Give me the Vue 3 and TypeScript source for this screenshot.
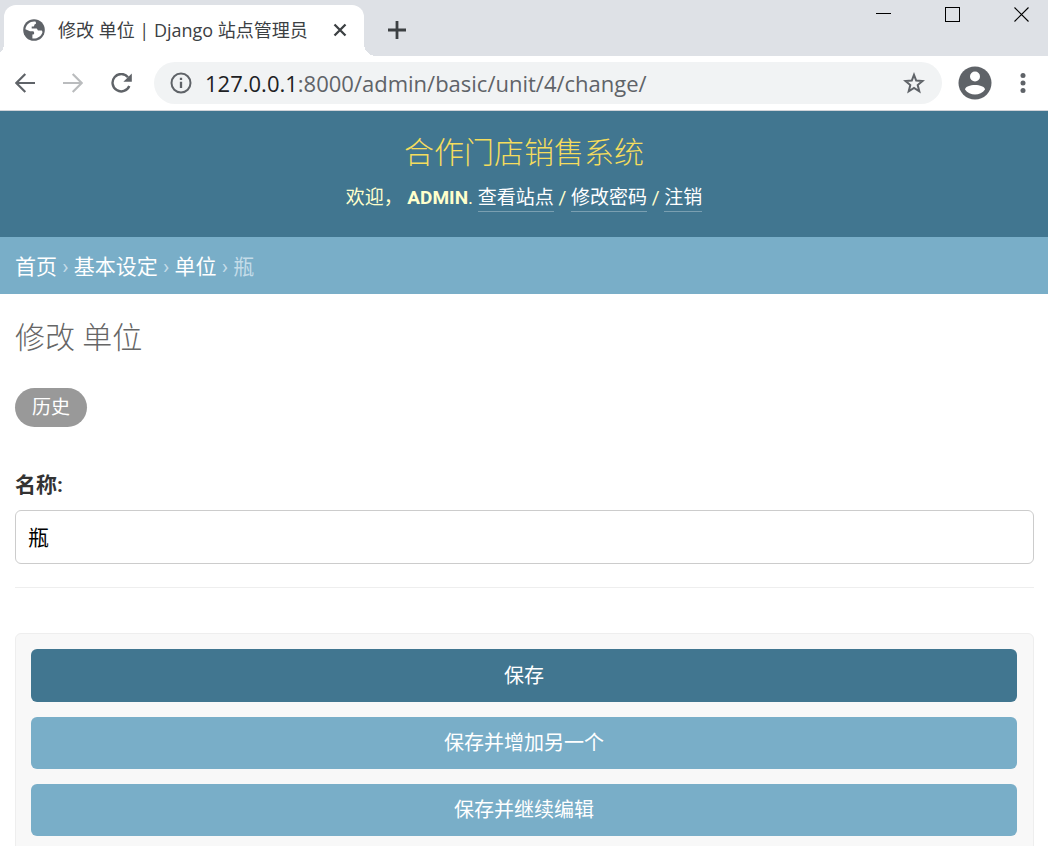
<script setup lang="ts">
import { ref } from 'vue'

const name = ref('瓶')

const tools = ['查看站点', '修改密码', '注销']
const crumbs = ['首页', '基本设定', '单位']
const actions = [
  { label: '保存', primary: true },
  { label: '保存并增加另一个', primary: false },
  { label: '保存并继续编辑', primary: false },
]
</script>

<template>
  <div class="window">
    <div class="tabstrip">
      <div class="tab">
        <svg class="globe" viewBox="0 0 22 22" width="22" height="22" aria-hidden="true">
          <circle cx="11" cy="11" r="10.8" fill="#5f6368" />
          <path d="M12.4 2.5C7.5 1.8 3 5.2 2.4 10.2L7 12.2H9.8C11.4 12.2 11.2 14 11 15.2L9.4 15.4V19.5C14 20 18.400 17.600 19.500 13L18.800 11.600H15.800C14.400 11.600 14.500 9.800 13.600 9.400H8.700V7.400H10.400C11.600 7.400 11 5.600 11.800 5.200C13.200 5 13.400 4.200 12.400 2.500Z" fill="#fff" />
        </svg>
        <span class="tab-title">修改 单位 | Django 站点管理员</span>
        <button class="icon-btn" type="button" aria-label="关闭标签页">
          <svg viewBox="0 0 14 14" width="14" height="14"><path d="M1.500 1.500L12.500 12.500M12.500 1.500L1.500 12.500" stroke="#3c4043" stroke-width="2.300" /></svg>
        </button>
      </div>
      <button class="icon-btn new-tab" type="button" aria-label="新标签页">
        <svg viewBox="0 0 18 18" width="18" height="18"><path d="M9 0V18M0 9H18" stroke="#3c4043" stroke-width="2.800" /></svg>
      </button>
      <div class="controls">
        <button class="icon-btn" type="button" aria-label="最小化">
          <svg viewBox="0 0 15 15" width="15" height="15"><path d="M0 6.500H15" stroke="#000" /></svg>
        </button>
        <button class="icon-btn" type="button" aria-label="最大化">
          <svg viewBox="0 0 15 15" width="15" height="15"><rect x=".5" y=".5" width="14" height="14" fill="none" stroke="#000" /></svg>
        </button>
        <button class="icon-btn" type="button" aria-label="关闭">
          <svg viewBox="0 0 15 15" width="15" height="15"><path d="M.5 .5L14.500 14.500M14.500 .5L.5 14.500" stroke="#000" stroke-width="1.100" /></svg>
        </button>
      </div>
    </div>

    <div class="toolbar">
      <div class="nav">
        <button class="icon-btn" type="button" aria-label="后退">
          <svg viewBox="0 0 20 20" width="20" height="20"><path d="M20 10H1.800M10.300 1L1.300 10L10.300 19" fill="none" stroke="#5f6368" stroke-width="2.200" /></svg>
        </button>
        <button class="icon-btn" type="button" aria-label="前进">
          <svg viewBox="0 0 20 20" width="20" height="20"><path d="M0 10H18.200M9.700 1L18.700 10L9.700 19" fill="none" stroke="#babcbe" stroke-width="2.200" /></svg>
        </button>
        <button class="icon-btn" type="button" aria-label="重新加载">
          <svg viewBox="0 0 22 20" width="22" height="20"><path d="M17 4.200A8.700 8.700 0 1 0 18.300 13" fill="none" stroke="#5f6368" stroke-width="2.400" /><path d="M20.800 .4V8.800H12.400Z" fill="#5f6368" /></svg>
        </button>
      </div>
      <div class="omnibox">
        <svg viewBox="0 0 22 22" width="22" height="22" aria-hidden="true"><circle cx="11" cy="11" r="9.500" fill="none" stroke="#5f6368" stroke-width="2" /><path d="M11 9.700V16M11 5.700V8" stroke="#5f6368" stroke-width="2.300" /></svg>
        <span class="url"><span class="host">127.0.0.1</span>:8000/admin/basic/unit/4/change/</span>
        <button class="icon-btn" type="button" aria-label="添加书签">
          <svg viewBox="0 0 22 22" width="22" height="22"><path d="M11 2.800L13.200 8.500L19.500 9L14.700 13L16.300 19.400L11 16L5.700 19.400L7.300 13L2.500 9L8.800 8.500Z" fill="none" stroke="#5f6368" stroke-width="2" /></svg>
        </button>
      </div>
      <button class="icon-btn" type="button" aria-label="用户">
        <svg viewBox="0 0 34 34" width="34" height="34"><circle cx="17" cy="17" r="16.500" fill="#5f6368" /><circle cx="17" cy="10.500" r="5" fill="#fff" /><path d="M7 23.500C7.500 17.500 26.500 17.500 27 23.500C22.500 30.300 11.500 30.300 7 23.500Z" fill="#fff" /></svg>
      </button>
      <button class="icon-btn more" type="button" aria-label="菜单">
        <svg viewBox="0 0 6 20" width="6" height="20"><g fill="#5f6368"><circle cx="3" cy="2.500" r="2.500" /><circle cx="3" cy="10" r="2.500" /><circle cx="3" cy="17.500" r="2.500" /></g></svg>
      </button>
    </div>

    <div class="page">
      <header class="header">
        <div class="brand">合作门店销售系统</div>
        <div class="user-tools">
          欢迎， <strong>ADMIN</strong>.
          <template v-for="(tool, i) in tools" :key="tool"><template v-if="i"> / </template><a href="#">{{ tool }}</a></template>
        </div>
      </header>
      <nav class="breadcrumbs">
        <template v-for="crumb in crumbs" :key="crumb"><a href="#">{{ crumb }}</a> › </template>瓶
      </nav>
      <main class="content">
        <h1>修改 单位</h1>
        <a class="history" href="#">历史</a>
        <form @submit.prevent>
          <div class="row">
            <label for="unit-name">名称:</label>
            <input id="unit-name" v-model="name" type="text">
          </div>
          <div class="submit-row">
            <button v-for="a in actions" :key="a.label" type="submit" :class="{ primary: a.primary }">{{ a.label }}</button>
          </div>
        </form>
      </main>
    </div>
  </div>
</template>

<style>
body {
  margin: 0;
  background: #fff;
}
</style>

<style scoped>
* {
  box-sizing: border-box;
}
.window {
  display: flex;
  flex-direction: column;
  height: 100vh;
  overflow: hidden;
  font-family: Roboto, "Noto Sans CJK SC", sans-serif;
}
svg {
  display: block;
  flex: none;
}
.icon-btn {
  padding: 0;
  border: 0;
  background: none;
}
.tabstrip {
  display: flex;
  flex: none;
  height: 56px;
  padding-left: 4px;
  background: #dee1e6;
}
.tab {
  position: relative;
  display: flex;
  align-items: center;
  width: 360px;
  margin-top: 5px;
  padding: 0 17px 2px 19px;
  border-radius: 12px 12px 0 0;
  background: #fff;
}
.tab::before,
.tab::after {
  content: "";
  position: absolute;
  bottom: 0;
  width: 12px;
  height: 12px;
}
.tab::before {
  right: 100%;
  background: radial-gradient(circle at 0 0, transparent 12px, #fff 12px);
}
.tab::after {
  left: 100%;
  background: radial-gradient(circle at 100% 0, transparent 12px, #fff 12px);
}
.tab-title {
  flex: 1;
  margin-left: 13px;
  color: #3c4043;
  font: 18px/26px "Open Sans", "Noto Sans CJK SC", sans-serif;
  white-space: nowrap;
}
.new-tab {
  margin: 4px 0 0 24px;
}
.controls {
  display: flex;
  align-items: flex-start;
  gap: 54px;
  margin-left: auto;
  padding: 7px 19px 0 0;
}
.toolbar {
  display: flex;
  flex: none;
  align-items: center;
  height: 55px;
  padding: 0 22px 0 15px;
  border-bottom: 1px solid #d0d3d8;
  background: #fff;
}
.nav {
  display: flex;
  gap: 28px;
}
.omnibox {
  display: flex;
  flex: 1;
  align-items: center;
  height: 42px;
  margin: 0 16px 0 21px;
  padding: 0 17px 0 16px;
  border-radius: 21px;
  background: #f1f3f4;
}
.url {
  flex: 1;
  margin-left: 13px;
  color: #5f6368;
  font: 22px/30px "Open Sans", "Noto Sans", sans-serif;
}
.host {
  color: #202124;
}
.more {
  margin-left: 28px;
}
.page {
  flex: 1;
  min-height: 0;
  overflow: hidden;
}
.header {
  height: 126px;
  padding-top: 21px;
  background: #417690;
  color: #ffc;
  text-align: center;
}
.brand {
  color: #f5dd5d;
  font-size: 30px;
  font-weight: 300;
  line-height: 42px;
}
.user-tools {
  margin-top: 10px;
  font-size: 19px;
  line-height: 28px;
}
.user-tools a {
  display: inline-block;
  border-bottom: 1px solid #7a9fb1;
  color: #fff;
  line-height: 27px;
  text-decoration: none;
}
.breadcrumbs {
  padding: 17px 15px 13px;
  background: #79aec8;
  color: #c4dce8;
  font-size: 21px;
  line-height: 27px;
}
.breadcrumbs a {
  color: #fff;
  text-decoration: none;
}
.content {
  padding: 23px 14px 40px 15px;
}
h1 {
  margin: 0 0 29px;
  color: #666;
  font-size: 30px;
  font-weight: 300;
  line-height: 42px;
}
.history {
  display: inline-block;
  padding: 0 17px;
  border-radius: 20px;
  background: #999;
  color: #fff;
  font-size: 19px;
  line-height: 39px;
  text-decoration: none;
  vertical-align: top;
}
.row {
  margin-top: 43px;
  padding-bottom: 23px;
  border-bottom: 1px solid #eee;
}
label {
  display: block;
  color: #333;
  font-size: 21px;
  font-weight: 700;
  line-height: 30px;
}
input {
  display: block;
  width: 100%;
  height: 54px;
  margin-top: 10px;
  padding: 0 12px 2px;
  border: 1px solid #ccc;
  border-radius: 6px;
  background: #fff;
  color: #000;
  font: 21px/30px Roboto, "Noto Sans CJK SC", sans-serif;
}
.submit-row {
  display: flex;
  flex-direction: column;
  gap: 15px;
  margin-top: 45px;
  padding: 15px 16px 15px 15px;
  border: 1px solid #eee;
  border-radius: 6px;
  background: #f8f8f8;
}
.submit-row button {
  height: 52px;
  padding: 0;
  border: 0;
  border-radius: 6px;
  background: #79aec8;
  color: #fff;
  font: 20px/30px Roboto, "Noto Sans CJK SC", sans-serif;
}
.submit-row .primary {
  height: 53px;
  background: #417690;
}
</style>
